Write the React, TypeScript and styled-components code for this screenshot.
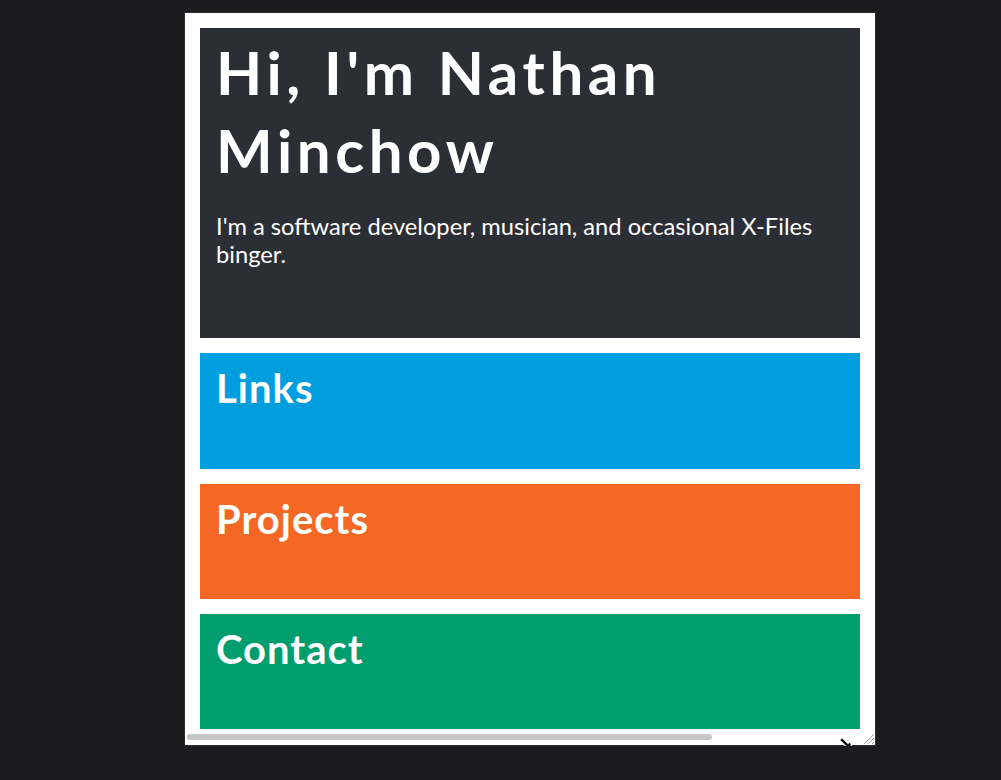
import React from "react";
import styled, { createGlobalStyle } from "styled-components";

const Global = createGlobalStyle`
  html, body { margin: 0; padding: 0; background: #1c1c1e; }
  body { font-family: "Lato", "Liberation Sans", sans-serif; }
`;

const Page = styled.div`
  padding: 12px 0 0 184px;
`;

const Frame = styled.div`
  position: relative;
  width: 690px;
  background: #ffffff;
  border: 1px solid #2e2e30;
  display: flex;
  flex-direction: column;
`;

const Content = styled.div`
  padding: 15px 15px 0 15px;
  display: flex;
  flex-direction: column;
  gap: 15px;
`;

const Panel = styled.section<{ $bg: string; $h: number }>`
  background: ${(p) => p.$bg};
  height: ${(p) => p.$h}px;
  padding: 0 16px;
  box-sizing: border-box;
  color: #ffffff;
  overflow: hidden;
`;

const Title = styled.h1`
  margin: 0;
  padding-top: 5px;
  font-family: "Lato", sans-serif;
  font-weight: 700;
  font-size: 60px;
  line-height: 78px;
  letter-spacing: 4.6px;
`;

const Lead = styled.p`
  margin: 23px 0 0 0;
  font-family: "Lato", sans-serif;
  font-size: 23.7px;
  line-height: 28px;
`;

const SectionTitle = styled.h2`
  margin: 0;
  padding-top: 11px;
  font-family: "Lato", sans-serif;
  font-weight: 700;
  font-size: 40px;
  line-height: 48px;
  letter-spacing: 1px;
`;

const ScrollRow = styled.div`
  height: 16px;
  display: flex;
  align-items: center;
  justify-content: space-between;
  padding: 0 0 0 2px;
`;

const Thumb = styled.div`
  width: 525px;
  height: 6px;
  border-radius: 3px;
  background: #c6c6c6;
`;

const Grip = styled.svg`
  width: 14px;
  height: 14px;
  align-self: flex-end;
`;

const Cursor = styled.svg`
  position: absolute;
  left: 653px;
  top: 723px;
  width: 16px;
  height: 16px;
  overflow: visible;
`;

export default function App() {
  return (
    <>
      <Global />
      <Page>
        <Frame>
          <Content>
            <Panel $bg="#2c2e36" $h={310}>
              <Title>Hi, I'm Nathan Minchow</Title>
              <Lead>
                I'm a software developer, musician, and occasional X-Files binger.
              </Lead>
            </Panel>
            <Panel $bg="#009ddf" $h={116}>
              <SectionTitle>Links</SectionTitle>
            </Panel>
            <Panel $bg="#f46725" $h={115}>
              <SectionTitle>Projects</SectionTitle>
            </Panel>
            <Panel $bg="#009d6f" $h={115}>
              <SectionTitle>Contact</SectionTitle>
            </Panel>
          </Content>
          <ScrollRow>
            <Thumb />
            <Grip viewBox="0 0 14 14">
              <path d="M13 3 L3 13 M13 7 L7 13 M13 11 L11 13" stroke="#a0a0a0" strokeWidth="1" fill="none" />
            </Grip>
          </ScrollRow>
          <Cursor viewBox="0 0 16 16">
            <polygon
              points="1.5,4 4,1.5 10,7.5 12.5,5 14,14 5,12.5 7.5,10"
              fill="#000"
              stroke="#fff"
              strokeWidth="1.2"
              strokeLinejoin="miter"
            />
          </Cursor>
        </Frame>
      </Page>
    </>
  );
}
